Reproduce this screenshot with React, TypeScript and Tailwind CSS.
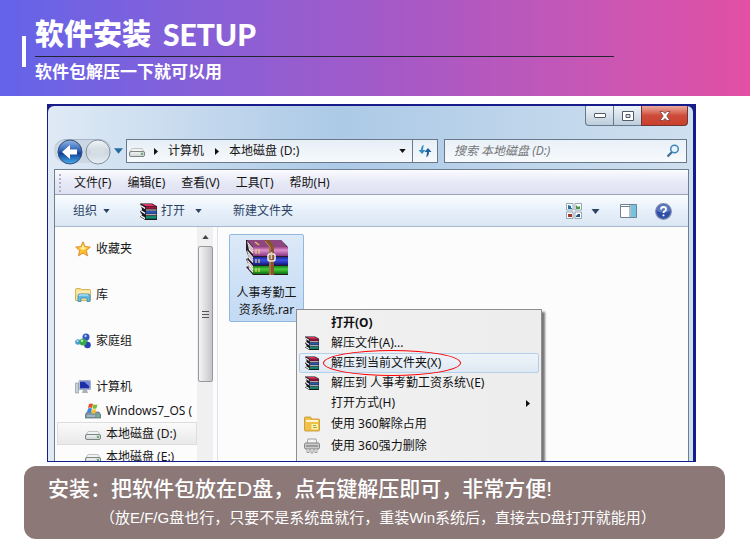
import type { ReactNode } from "react";

const menus = ["文件(F)", "编辑(E)", "查看(V)", "工具(T)", "帮助(H)"];

function Books({ className }: { className?: string }) {
  return (
    <svg viewBox="0 0 16 16" className={className} aria-hidden="true">
      <path d="M0 .5h11.500L16 3v13H5L0 13l2-2-2-3 2-2z" fill="#17171c" />
      <path d="M1.500 1H11l4 2H5.500z" fill="#d93560" />
      <path d="M5.500 3.500h10v1.800h-10z" fill="#a5123f" />
      <path d="M.8 1.800l4 2.400v1.600l-4-2.400zM.8 6.500l4 2.400v1.600l-4-2.400zM.8 11.300l4 2.400v1.600l-4-2.400z" fill="#f3eeee" />
      <path d="M5.500 6h10v1h-10zM5.500 10.600h10v1h-10z" fill="#e4dcd8" />
      <path d="M5.500 7.600h10v2.400h-10z" fill="#2c55b4" />
      <path d="M5.500 12.200h10v2.600h-10z" fill="#148a6c" />
    </svg>
  );
}

function Archive() {
  return (
    <svg viewBox="0 0 44 38" className="h-[38px] w-11" aria-hidden="true">
      <defs>
        <linearGradient id="pink" x2="0" y2="1">
          <stop stopColor="#a3468e" />
          <stop offset=".35" stopColor="#dd92cf" />
          <stop offset="1" stopColor="#8a3580" />
        </linearGradient>
        <linearGradient id="blue" x2="0" y2="1">
          <stop stopColor="#1b269c" />
          <stop offset=".4" stopColor="#3c51e2" />
          <stop offset="1" stopColor="#10187c" />
        </linearGradient>
        <linearGradient id="green" x2="0" y2="1">
          <stop stopColor="#11851a" />
          <stop offset=".4" stopColor="#4bcb3c" />
          <stop offset="1" stopColor="#0a7010" />
        </linearGradient>
      </defs>
      <path d="M1 1h35l7 7v28H8l-7-8 3-1-3-7 3-1-3-8z" fill="#2b1a28" />
      <path d="M2 1h34l6 7H8z" fill="#8e4680" />
      <path d="M2 2l6 7v6L4 11zM2 11l6 7v6l-4-4zM2 20l6 7v7l-4-4z" fill="#f3efec" />
      <path d="M3 5l5 6M3 7l5 6M3 14l5 6M3 16l5 6M3 23l5 6M3 26l5 6" stroke="#9a8f90" strokeWidth=".7" />
      <path d="M8 8h35v9H8z" fill="url(#pink)" />
      <path d="M8 18h35v8H8z" fill="url(#blue)" />
      <path d="M8 27h35v8H8z" fill="url(#green)" />
      <path d="M11 10v5M14 10v5M11 20v4M14 20v4M11 29v4M14 29v4" stroke="#ecd678" strokeWidth="1.200" />
      <path d="M20 1h5l4 7v28h-5V8z" fill="#87562c" />
      <path d="M25 8v28M20 2l5 6" stroke="#c49458" />
      <path d="M10 3l4 3" stroke="#e1c45c" strokeWidth="1.500" />
      <rect x="23" y="15" width="7" height="7" rx="2" fill="none" stroke="#f0eee8" strokeWidth="1.600" />
      <path d="M26.500 13v7" stroke="#d9d2c4" strokeWidth="1.500" />
    </svg>
  );
}

function Drive({ className }: { className?: string }) {
  return (
    <svg viewBox="0 0 16 16" className={className} aria-hidden="true">
      <path d="M3 5.500h10l2.500 4H.5z" fill="#f1f2f2" stroke="#b3b8b8" strokeWidth=".8" />
      <rect x=".5" y="8.500" width="15" height="5" rx="1.500" fill="#d8dbdb" stroke="#7d8484" />
      <path d="M2 10h9" stroke="#fbfcfc" />
      <path d="M12 11h2" stroke="#3da24a" strokeWidth="1.600" />
    </svg>
  );
}

function SystemDrive() {
  return (
    <svg viewBox="0 0 16 16" className="size-4" aria-hidden="true">
      <path d="M2 9h12l2 3v3H0v-3z" fill="#7d97a2" stroke="#566b76" strokeWidth=".7" />
      <path d="M2 13h8" stroke="#c4d5db" />
      <path d="M12 13h2" stroke="#4fe05c" strokeWidth="1.500" />
      <path d="M4 1q2-1 4 0L7 5Q5 4 3 5z" fill="#e65127" />
      <path d="M8.500 1.300q2 1 4 0l-1 4q-2 1-4 0z" fill="#79bd34" />
      <path d="M3 5.500q2-1 4 0l-1 4q-2-1-4 0z" fill="#3d86da" />
      <path d="M7.400 6q2 1 4 0l-1 4q-2 1-4 0z" fill="#f7c12e" />
    </svg>
  );
}

function Star() {
  return (
    <svg viewBox="0 0 16 16" className="size-4" aria-hidden="true">
      <path d="M8 .8l2.100 4.800 5.200.5-3.900 3.500 1.100 5.200L8 12.100l-4.500 2.700 1.100-5.200L.7 6.100l5.200-.5z" fill="#fbc02f" stroke="#d9822a" strokeWidth=".9" strokeLinejoin="round" />
      <path d="M8 3l1.300 3.500 3 .3L8 9 4 6.800l2.700-.3z" fill="#fff0a2" />
    </svg>
  );
}

function Library() {
  return (
    <svg viewBox="0 0 16 16" className="size-4" aria-hidden="true">
      <path d="M.5 2.500q0-1 1-1h4l1 1h8q1 0 1 1v10h-15z" fill="#f6e092" stroke="#c9a544" strokeWidth=".8" />
      <path d="M1 5h14" stroke="#fff5c4" />
      <path d="M3 14.500V9q0-2 2-2h8q2 0 2 2v5.500h-3V11H6v3.500z" fill="#62bce6" stroke="#358ab8" strokeWidth=".8" />
      <path d="M4 9q0-1 1-1h8" stroke="#d2f0fc" fill="none" />
    </svg>
  );
}

function Homegroup() {
  return (
    <svg viewBox="0 0 16 16" className="size-4" aria-hidden="true">
      <path d="M4 9l8-5v8z" stroke="#8cb4c8" strokeWidth="2" fill="none" />
      <circle cx="3" cy="9" r="2.800" fill="#4a9ed0" />
      <circle cx="11" cy="4" r="3.500" fill="#3156c2" />
      <circle cx="12.500" cy="12" r="3.300" fill="#2645b1" />
      <circle cx="8" cy="9" r="3.500" fill="#36a948" />
      <circle cx="7" cy="7.800" r="1.200" fill="#b4eeb0" />
      <circle cx="10.500" cy="3" r="1.200" fill="#b1cbf7" />
      <circle cx="2.500" cy="8" r="1" fill="#c2e4f8" />
    </svg>
  );
}

function Computer() {
  return (
    <svg viewBox="0 0 16 16" className="size-4" aria-hidden="true">
      <path d="M.5 4h3v10h-3z" fill="#cad1d4" stroke="#8e999e" strokeWidth=".7" />
      <rect x="4" y="1.500" width="11.500" height="9" rx=".6" fill="#d6dde6" stroke="#8894a8" strokeWidth=".7" />
      <path d="M5 2.500h9.500v7H5z" fill="#1c2fa8" />
      <path d="M9 2.500h5.500v5z" fill="#768ce2" />
      <path d="M8 11h4l1 3H7z" fill="#a8b2bb" />
    </svg>
  );
}

function Folder360() {
  return (
    <svg viewBox="0 0 16 16" className="size-4" aria-hidden="true">
      <path d="M.5 2q0-1 1-1h5l1 2h7q1 0 1 1v10q0 1-1 1h-13q-1 0-1-1z" fill="#efc04a" stroke="#c58f28" strokeWidth=".8" />
      <path d="M2 4h12v2H2z" fill="#fff6cf" />
      <path d="M7.500 8h6.500v5.500H7.500z" fill="#fdf2ae" />
      <path d="M9 9.500h3M9 11.500h4" stroke="#9aa644" />
    </svg>
  );
}

function Shredder() {
  return (
    <svg viewBox="0 0 16 16" className="size-4" aria-hidden="true">
      <path d="M4 1h8l1 5H3z" fill="#f3f3f3" stroke="#8d8d8d" strokeWidth=".8" />
      <rect x=".5" y="5" width="15" height="6" rx="1.500" fill="#cccccc" stroke="#818181" />
      <path d="M2 8h12" stroke="#686868" />
      <path d="M3 11v3.500h2V11M7 11v4h2v-4M11 11v3.500h2V11" fill="#fff" stroke="#858585" strokeWidth=".8" />
    </svg>
  );
}

function Caret({ className }: { className: string }) {
  return (
    <svg viewBox="0 0 8 5" className={className} aria-hidden="true">
      <path d="M0 0h8L4 5z" fill="currentColor" />
    </svg>
  );
}

function RightCaret() {
  return (
    <svg viewBox="0 0 4 7" className="h-[7px] w-1" aria-hidden="true">
      <path d="M0 0l4 3.500L0 7z" fill="#111" />
    </svg>
  );
}

function Banner() {
  return (
    <header className="flex h-24 items-start bg-linear-to-r from-[#6363e9] via-[#a459c7] via-52% to-[#e34fa5] pl-[22px] text-white">
      <div className="mt-9 h-[31px] w-1 bg-white" />
      <div className="ml-[9px] w-full pt-4 font-['Lato','Noto_Sans_CJK_SC',sans-serif]">
        <h1 className="flex h-[41px] w-[81%] items-start gap-3 border-b border-[#252530] text-[29px] leading-9 font-black whitespace-nowrap">
          <span>软件安装</span>
          <span className="text-[30px]">SETUP</span>
        </h1>
        <p className="pt-[3px] text-[17px] leading-6 font-bold">软件包解压一下就可以用</p>
      </div>
    </header>
  );
}

function WindowControls() {
  return (
    <div className="flex h-5 justify-end pr-px">
      <button aria-label="最小化" className="flex w-[29px] items-center justify-center rounded-bl border border-t-0 border-[#66788c] bg-linear-to-b from-[#eef4f9] via-[#d7e1ea] to-[#bccddc]">
        <svg viewBox="0 0 12 5" className="h-[5px] w-3"><rect x=".5" y=".5" width="11" height="4" rx=".5" fill="#fff" stroke="#555a66" /></svg>
      </button>
      <button aria-label="最大化" className="flex w-[27px] items-center justify-center border-b border-[#66788c] bg-linear-to-b from-[#eef4f9] via-[#d7e1ea] to-[#bccddc]">
        <svg viewBox="0 0 12 10" className="h-[10px] w-3"><path d="M.5.500h11v9H.5zM4 3.500h4v3H4z" fill="#fff" fillRule="evenodd" stroke="#555a66" /></svg>
      </button>
      <button aria-label="关闭" className="flex w-[47px] items-center justify-center rounded-br border border-t-0 border-[#713536] bg-linear-to-b from-[#e9a99e] via-[#cf4b3a] via-50% to-[#c8402c]">
        <svg viewBox="0 0 12 10" className="h-[10px] w-3"><path d="M1 .5h3l2 2 2-2h3L7.800 5l3.200 4.500H8l-2-2-2 2H1L4.200 5z" fill="#fff" stroke="#71403f" strokeWidth=".8" /></svg>
      </button>
    </div>
  );
}

function AddressRow() {
  return (
    <div className="mt-[13px] flex h-6 items-center pr-[2px]">
      <div className="flex h-6 items-center rounded-full border-t border-[#a5b5c6] bg-[#cbd7e2]">
        <button aria-label="后退" className="ml-[3px]">
          <svg viewBox="0 0 26 26" className="size-[26px]">
            <defs>
              <linearGradient id="back" x2="0" y2="1">
                <stop stopColor="#8fb5e3" />
                <stop offset=".45" stopColor="#2f62b5" />
                <stop offset=".55" stopColor="#123f97" />
                <stop offset="1" stopColor="#49b0ea" />
              </linearGradient>
            </defs>
            <circle cx="13" cy="13" r="12" fill="url(#back)" stroke="#3b4d78" />
            <path d="M5 13l8-7v4.500h7v5h-7V20z" fill="#fff" />
          </svg>
        </button>
        <button aria-label="前进" className="ml-[2px]">
          <svg viewBox="0 0 26 26" className="size-[26px]">
            <defs>
              <linearGradient id="next" x2="0" y2="1">
                <stop stopColor="#f2f5f7" />
                <stop offset=".5" stopColor="#ccd6de" />
                <stop offset="1" stopColor="#e8eff4" />
              </linearGradient>
            </defs>
            <circle cx="13" cy="13" r="12" fill="url(#next)" stroke="#8290a0" />
            <path d="M21 13l-7-6v4H6v4h8v4z" fill="#d6dfe6" />
          </svg>
        </button>
      </div>
      <button aria-label="最近的页面" className="ml-[3px] text-[#256c9c]"><Caret className="h-[6px] w-[9px]" /></button>
      <div className="ml-[3px] flex h-6 flex-[308] items-center border border-[#67798a] bg-linear-to-b from-[#e6eef6] to-[#f7f9fc] pl-[2px]">
        <Drive className="size-4" />
        <span className="ml-[9px]"><RightCaret /></span>
        <a href="#computer" className="ml-[10px]">计算机</a>
        <span className="ml-[11px]"><RightCaret /></span>
        <a href="#d" className="ml-[10px]">本地磁盘 (D:)</a>
        <button aria-label="历史记录" className="mr-[6px] ml-auto text-[#111]"><Caret className="h-1 w-[7px]" /></button>
        <button aria-label="刷新" className="flex h-full w-[25px] items-center justify-center border-l border-[#67798a]">
          <svg viewBox="0 0 14 14" className="size-[14px]" aria-hidden="true">
            <path d="M6 1Q3 1.500 3 6H.5L4 10l3.500-4H5Q5 3 6 1z" fill="#2f8fc0" />
            <path d="M8 13q3-.5 3-5h2.500L10 4 6.500 8H9q0 3-1 5z" fill="#1f5f9a" />
          </svg>
        </button>
      </div>
      <label className="ml-[6px] flex h-6 flex-[226] items-center border border-[#67798a] bg-linear-to-b from-[#e9f0f7] to-[#f7fafc] pr-[6px] pl-[9px]">
        <input aria-label="搜索" placeholder="搜索 本地磁盘 (D:)" className="w-full min-w-0 bg-transparent italic outline-none placeholder:text-[#737477]" />
        <svg viewBox="0 0 14 14" className="size-[14px] shrink-0" aria-hidden="true">
          <path d="M1.500 12.500L6 8" stroke="#386b94" strokeWidth="2.200" />
          <circle cx="8.500" cy="5" r="3.800" fill="#e6f4ff" stroke="#4286b8" strokeWidth="1.500" />
        </svg>
      </label>
    </div>
  );
}

function MenuBar() {
  return (
    <nav className="flex h-[26px] items-center gap-4 border-t border-b border-t-[#6f7f90] border-b-[#9ba3b5] bg-linear-to-b from-[#fbfcff] via-[#e7e9f6] via-50% to-[#dfe1f2] pt-px pl-1">
      <span className="mr-[-3px] h-[18px] border-l-2 border-dotted border-[#b3b2c7]" />
      {menus.map((menu) => (
        <button key={menu}>{menu}</button>
      ))}
    </nav>
  );
}

function Toolbar() {
  return (
    <div className="flex h-8 items-center border-b border-[#a7b9cd] bg-linear-to-b from-[#fafdff] via-[#e7f0fa] via-50% to-[#dbe7f4] pt-px pr-4 pl-[18px] text-[#2d4364]">
      <button className="flex items-center gap-[6px]">组织 <Caret className="h-1 w-[7px]" /></button>
      <button className="ml-[30px] flex items-center gap-1"><Books className="size-[17px]" />打开</button>
      <button aria-label="打开选项" className="ml-[10px]"><Caret className="h-1 w-[7px]" /></button>
      <button className="ml-[31px]">新建文件夹</button>
      <button aria-label="更改视图" className="ml-auto">
        <svg viewBox="0 0 16 16" className="size-4">
          <path d="M.5.500h6.500v6.500H.5zM9 .5h6.500v6.500H9zM.5 9h6.500v6.500H.5zM9 9h6.500v6.500H9z" fill="#fff" stroke="#8492a0" strokeWidth=".8" />
          <path d="M2 2l3 1v2h1v1H2z" fill="#246e9f" />
          <path d="M10 2l2 2 2-1v3h-4z" fill="#439842" />
          <path d="M2 11h4v3H2z" fill="#a63925" />
          <path d="M10 13l2-2h2v3h-4z" fill="#234f86" />
        </svg>
      </button>
      <button aria-label="视图选项" className="ml-[9px]"><Caret className="h-[5px] w-[9px]" /></button>
      <button aria-label="显示预览窗格" className="ml-[20px]">
        <svg viewBox="0 0 17 14" className="h-[14px] w-[17px]">
          <path d="M.5.500h16v13H.5z" fill="#fff" stroke="#6d8195" />
          <path d="M1 2.500h9M10 1v12" stroke="#6d8195" />
          <path d="M11 1h5v12h-5z" fill="#76c3df" />
        </svg>
      </button>
      <button aria-label="帮助" className="ml-[18px]">
        <svg viewBox="0 0 17 17" className="size-[17px]">
          <circle cx="8.500" cy="8.500" r="7.800" fill="#2e4da7" stroke="#7f8daf" strokeWidth="1.200" />
          <path d="M2 8a6.500 6.500 0 0113 0q-6 3-13 0z" fill="#718bd0" opacity=".7" />
          <path d="M6 6.500Q6 4 8.500 4T11 6.200q0 1.500-1.500 2.200-1 .5-1 1.600M8.500 11.500v1.800" fill="none" stroke="#fff" strokeWidth="1.800" />
        </svg>
      </button>
    </div>
  );
}

function Group({ icon, children }: { icon: ReactNode; children: ReactNode }) {
  return (
    <a href="#" className="mb-[22px] flex h-6 items-center gap-[5px] pl-5 last-of-type:mb-0">
      {icon}
      {children}
    </a>
  );
}

function Disk({ icon, active, children }: { icon: ReactNode; active?: boolean; children: ReactNode }) {
  return (
    <li>
      <a
        href="#"
        className={`ml-[2px] flex h-[23px] items-center gap-[5px] border pl-[27px] whitespace-nowrap ${
          active ? "border-[#dddddd] bg-linear-to-b from-[#fafafa] to-[#e9e9e9]" : "border-transparent"
        }`}
      >
        <span className="shrink-0">{icon}</span>
        {children}
      </a>
    </li>
  );
}

function Sidebar() {
  return (
    <aside className="flex w-[163px] shrink-0 border-r border-[#d9e2ee]">
      <div className="min-w-0 flex-1 pt-[10px]">
        <Group icon={<Star />}>收藏夹</Group>
        <Group icon={<Library />}>库</Group>
        <Group icon={<Homegroup />}>家庭组</Group>
        <Group icon={<Computer />}>计算机</Group>
        <ul>
          <Disk icon={<SystemDrive />}>Windows7_OS (</Disk>
          <Disk icon={<Drive className="size-4" />} active>本地磁盘 (D:)</Disk>
          <Disk icon={<Drive className="size-4" />}>本地磁盘 (E:)</Disk>
        </ul>
      </div>
      <div className="mr-1 flex w-4 flex-col items-center bg-[#f0f0f1]">
        <div className="flex h-[19px] items-center text-[#444]"><Caret className="h-1 w-[7px] rotate-180" /></div>
        <div className="flex h-[136px] w-[15px] flex-col items-center justify-center gap-[2px] rounded-xs border border-[#98989c] bg-linear-to-r from-[#f5f5f6] via-[#dedee1] to-[#c5c5ca]">
          <span className="h-px w-[7px] bg-[#555]" />
          <span className="h-px w-[7px] bg-[#555]" />
          <span className="h-px w-[7px] bg-[#555]" />
        </div>
      </div>
    </aside>
  );
}

function MenuItem({ icon, children, className = "h-5" }: { icon?: ReactNode; children: ReactNode; className?: string }) {
  return (
    <li>
      <button className={`relative flex w-full items-center border pr-2 whitespace-nowrap ${className}`}>
        <span className="flex w-[31px] pl-1">{icon}</span>
        {children}
      </button>
    </li>
  );
}

function ContextMenu() {
  const plain = "h-5 border-transparent";
  const tall = "h-[22px] border-transparent";
  const rar = <Books className="ml-px size-[14px]" />;

  return (
    <ul className="absolute top-[82px] left-[78px] h-48 w-[246px] border border-[#8e8e8e] bg-linear-to-r from-[#f1f1f1] to-[#ededee] px-[2px] pt-[3px] text-[#111] shadow-[3px_3px_2px_#77777a]">
      <MenuItem className={`${plain} font-bold`}>打开(O)</MenuItem>
      <MenuItem className={plain} icon={rar}>解压文件(A)...</MenuItem>
      <MenuItem className="h-5 rounded-xs border-[#b4cfea] bg-linear-to-b from-[#edf3fa] to-[#dfe9f3]" icon={rar}>
        解压到当前文件夹(X)
        <span className="absolute top-[-4px] left-[23px] h-[26px] w-[138px] rounded-[50%] border border-[#ff0000]" />
      </MenuItem>
      <MenuItem className={plain} icon={rar}>解压到 人事考勤工资系统\(E)</MenuItem>
      <MenuItem className={plain}>
        打开方式(H)
        <span className="ml-auto"><RightCaret /></span>
      </MenuItem>
      <MenuItem className={tall} icon={<Folder360 />}>使用 360解除占用</MenuItem>
      <MenuItem className={tall} icon={<Shredder />}>使用 360强力删除</MenuItem>
    </ul>
  );
}

function Explorer() {
  return (
    <section className="mt-2 mr-[54px] ml-[47px] bg-[#181c8a] pt-[2px] pr-[3px] pb-px pl-px font-['Noto_Sans','Noto_Sans_CJK_SC',sans-serif] text-xs text-[#161616]">
      <div className="overflow-hidden rounded-t-md bg-linear-to-r from-[#dfeaf5] via-[#acc9e6] via-45% to-[#cfe0ef] pr-1 pl-[6px]">
        <WindowControls />
        <AddressRow />
        <div className="mt-[6px] border-x border-[#6f7f90] bg-[#fcfcfc]">
          <MenuBar />
          <Toolbar />
          <div className="flex h-[234px] overflow-hidden">
            <Sidebar />
            <div className="relative flex-1 pt-[7px] pl-[11px]">
              <button className="flex h-[88px] w-[75px] flex-col items-center rounded-xs border border-[#91b8df] bg-linear-to-b from-[#dce9f8] to-[#c2daf4] pt-1">
                <Archive />
                <span className="mt-[7px] w-[62px] leading-[17px]">人事考勤工资系统.rar</span>
              </button>
              <ContextMenu />
            </div>
          </div>
        </div>
      </div>
    </section>
  );
}

export default function App() {
  return (
    <main className="bg-white pb-3">
      <Banner />
      <Explorer />
      <footer className="mt-1 mr-[25px] ml-6 h-[73px] rounded-xl bg-[#8b7877] px-6 pt-2 font-['Liberation_Sans','Noto_Sans_CJK_SC',sans-serif] text-white">
        <p className="text-[21px] leading-[30px] font-medium">安装：把软件包放在D盘，点右键解压即可，非常方便!</p>
        <p className="pl-[52px] text-[15px] leading-7">（放E/F/G盘也行，只要不是系统盘就行，重装Win系统后，直接去D盘打开就能用）</p>
      </footer>
    </main>
  );
}
